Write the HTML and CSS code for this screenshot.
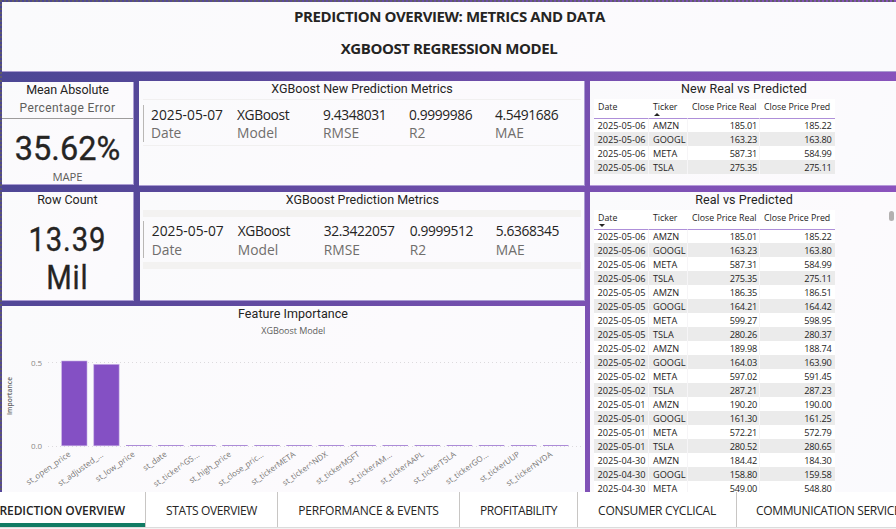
FILE: index.html
```html
<!DOCTYPE html>
<html lang="en">
<head>
<meta charset="utf-8">
<title>Prediction Overview</title>
<link rel="stylesheet" href="styles.css">
</head>
<body>
<main class="report">
  <header class="panel heading">
    <h1>PREDICTION OVERVIEW: METRICS AND DATA</h1>
    <h2>XGBOOST REGRESSION MODEL</h2>
  </header>
  <div class="columns">
    <div class="left">
      <div class="row first">
        <section class="panel kpi">
          <h3><span class="t-mean">Mean Absolute</span></h3>
          <p class="sub"><span>Percentage Error</span></p>
          <p class="value mape">35.62%</p>
          <p class="caption">MAPE</p>
        </section>
        <section class="panel metrics">
          <h3><span class="t-new">XGBoost New Prediction Metrics</span></h3>
          <div class="card thin">
            <dl><dd>2025-05-07</dd><dt>Date</dt></dl>
            <dl><dd>XGBoost</dd><dt>Model</dt></dl>
            <dl><dd>9.4348031</dd><dt>RMSE</dt></dl>
            <dl><dd>0.9999986</dd><dt>R2</dt></dl>
            <dl><dd>4.5491686</dd><dt>MAE</dt></dl>
          </div>
        </section>
      </div>
      <div class="row second">
        <section class="panel kpi">
          <h3><span class="t-row">Row Count</span></h3>
          <p class="value count">13.39<br>Mil</p>
        </section>
        <section class="panel metrics">
          <h3><span class="t-pred">XGBoost Prediction Metrics</span></h3>
          <div class="card thick">
            <dl><dd>2025-05-07</dd><dt>Date</dt></dl>
            <dl><dd>XGBoost</dd><dt>Model</dt></dl>
            <dl><dd>32.3422057</dd><dt>RMSE</dt></dl>
            <dl><dd>0.9999512</dd><dt>R2</dt></dl>
            <dl><dd>5.6368345</dd><dt>MAE</dt></dl>
          </div>
        </section>
      </div>
      <section class="panel chart">
        <svg width="583" height="186" viewBox="2 306 583 186">
          <text class="c-title" x="293" y="318" text-anchor="middle" textLength="110">Feature Importance</text>
          <text class="c-sub" x="293.3" y="334" text-anchor="middle" textLength="64">XGBoost Model</text>
          <text class="c-axis" transform="translate(12.2 396) rotate(-90)" text-anchor="middle" textLength="38">Importance</text>
          <text class="c-tick" x="42" y="366" text-anchor="end" textLength="11">0.5</text>
          <text class="c-tick" x="42" y="449" text-anchor="end" textLength="11">0.0</text>
          <path class="grid" d="M48 362.5H583M48 446.5H583"/>
          <g class="bars">
            <rect x="61.7" y="361" width="25.3" height="84.8"/>
            <rect x="93.8" y="364.4" width="25.3" height="81.4"/>
          </g>
          <g class="flat">
            <path d="M126 445.5h25.5M158.1 445.5h25.5M190.2 445.5h25.5M222.2 445.5h25.5M254.3 445.5h25.5M286.3 445.5h25.5M318.4 445.5h25.5M350.4 445.5h25.5M382.5 445.5h25.5M414.6 445.5h25.5M446.7 445.5h25.5M478.8 445.5h25.5M510.9 445.5h25.5M543 445.5h25.5"/>
          </g>
          <g class="labels" text-anchor="end">
            <text transform="translate(71.2 455.5) rotate(-35)" textLength="52">st_open_price</text>
            <text transform="translate(103.7 456) rotate(-35)" textLength="53">st_adjusted_...</text>
            <text transform="translate(135.4 455.5) rotate(-35)" textLength="46">st_low_price</text>
            <text transform="translate(167.4 455.5) rotate(-35)" textLength="27">st_date</text>
            <text transform="translate(200 456) rotate(-35)" textLength="54">st_ticker^GS...</text>
            <text transform="translate(231.6 455.5) rotate(-35)" textLength="49">st_high_price</text>
            <text transform="translate(264 456) rotate(-35)" textLength="53">st_close_pric...</text>
            <text transform="translate(296 455.5) rotate(-35)" textLength="52">st_tickerMETA</text>
            <text transform="translate(328.2 455.5) rotate(-35)" textLength="53">st_ticker^NDX</text>
            <text transform="translate(360 455.5) rotate(-35)" textLength="51">st_tickerMSFT</text>
            <text transform="translate(392.5 456) rotate(-35)" textLength="51">st_tickerAM...</text>
            <text transform="translate(424.4 455.5) rotate(-35)" textLength="51">st_tickerAAPL</text>
            <text transform="translate(456.5 455.5) rotate(-35)" textLength="50">st_tickerTSLA</text>
            <text transform="translate(489 456) rotate(-35)" textLength="50">st_tickerGO...</text>
            <text transform="translate(520.5 455.5) rotate(-35)" textLength="47">st_tickerUUP</text>
            <text transform="translate(552.8 455.5) rotate(-35)" textLength="54">st_tickerNVDA</text>
          </g>
        </svg>
      </section>
    </div>
    <div class="right">
      <section class="panel prices new">
        <h3><span class="t-nrp">New Real vs Predicted</span></h3>
        <table>
          <colgroup><col class="c1"><col class="c2"><col class="c3"><col class="c4"></colgroup>
          <thead><tr><th>Date</th><th><span class="sorted asc">Ticker</span></th><th>Close Price Real</th><th>Close Price Pred</th></tr></thead>
          <tbody>
            <tr><td>2025-05-06</td><td>AMZN</td><td>185.01</td><td>185.22</td></tr>
            <tr><td>2025-05-06</td><td>GOOGL</td><td>163.23</td><td>163.80</td></tr>
            <tr><td>2025-05-06</td><td>META</td><td>587.31</td><td>584.99</td></tr>
            <tr><td>2025-05-06</td><td>TSLA</td><td>275.35</td><td>275.11</td></tr>
          </tbody>
        </table>
      </section>
      <section class="panel prices all">
        <h3><span class="t-rp">Real vs Predicted</span></h3>
        <div class="scroll"><table>
          <colgroup><col class="c1"><col class="c2"><col class="c3"><col class="c4"></colgroup>
          <thead><tr><th><span class="sorted desc">Date</span></th><th>Ticker</th><th>Close Price Real</th><th>Close Price Pred</th></tr></thead>
          <tbody>
            <tr><td>2025-05-06</td><td>AMZN</td><td>185.01</td><td>185.22</td></tr>
            <tr><td>2025-05-06</td><td>GOOGL</td><td>163.23</td><td>163.80</td></tr>
            <tr><td>2025-05-06</td><td>META</td><td>587.31</td><td>584.99</td></tr>
            <tr><td>2025-05-06</td><td>TSLA</td><td>275.35</td><td>275.11</td></tr>
            <tr><td>2025-05-05</td><td>AMZN</td><td>186.35</td><td>186.51</td></tr>
            <tr><td>2025-05-05</td><td>GOOGL</td><td>164.21</td><td>164.42</td></tr>
            <tr><td>2025-05-05</td><td>META</td><td>599.27</td><td>598.95</td></tr>
            <tr><td>2025-05-05</td><td>TSLA</td><td>280.26</td><td>280.37</td></tr>
            <tr><td>2025-05-02</td><td>AMZN</td><td>189.98</td><td>188.74</td></tr>
            <tr><td>2025-05-02</td><td>GOOGL</td><td>164.03</td><td>163.90</td></tr>
            <tr><td>2025-05-02</td><td>META</td><td>597.02</td><td>591.45</td></tr>
            <tr><td>2025-05-02</td><td>TSLA</td><td>287.21</td><td>287.23</td></tr>
            <tr><td>2025-05-01</td><td>AMZN</td><td>190.20</td><td>190.00</td></tr>
            <tr><td>2025-05-01</td><td>GOOGL</td><td>161.30</td><td>161.25</td></tr>
            <tr><td>2025-05-01</td><td>META</td><td>572.21</td><td>572.79</td></tr>
            <tr><td>2025-05-01</td><td>TSLA</td><td>280.52</td><td>280.65</td></tr>
            <tr><td>2025-04-30</td><td>AMZN</td><td>184.42</td><td>184.30</td></tr>
            <tr><td>2025-04-30</td><td>GOOGL</td><td>158.80</td><td>159.58</td></tr>
            <tr><td>2025-04-30</td><td>META</td><td>549.00</td><td>548.80</td></tr>
          </tbody>
        </table><i class="thumb"></i></div>
      </section>
    </div>
  </div>
</main>
<nav class="tabs">
  <a class="tab active">PREDICTION OVERVIEW</a>
  <a class="tab stats">STATS OVERVIEW</a>
  <a class="tab perf">PERFORMANCE &amp; EVENTS</a>
  <a class="tab profit">PROFITABILITY</a>
  <a class="tab cyc">CONSUMER CYCLICAL</a>
  <a class="tab comm">COMMUNICATION SERVICES</a>
</nav>
</body>
</html>
```
FILE: styles.css
```css
* { box-sizing: border-box; }
body, h1, h2, h3, p, dl, dt, dd { margin: 0; font-weight: normal; }
body {
  width: 896px;
  height: 529px;
  overflow: hidden;
  background: #f3f3f3;
  color: #252423;
  font-family: "Open Sans", "Noto Sans", sans-serif;
}
.report {
  height: 492px;
  padding: 2px 0 0 2px;
  overflow: hidden;
  background:
    repeating-linear-gradient(90deg, #5f5b66 0 2px, transparent 2px 4px) 0 0 / 100% 2px no-repeat,
    repeating-linear-gradient(180deg, #5f5b66 0 2px, transparent 2px 4px) 0 0 / 2px 100% no-repeat,
    linear-gradient(112deg, #4a4694 0%, #5a489b 25%, #7850b1 60%, #9254c2 100%);
}
.panel {
  background: linear-gradient(120deg, #fafafc, #fcfafd 60%, #fafafd);
  overflow: hidden;
}
.heading {
  height: 70px;
  border-bottom: 1px solid #a99bd0;
  text-align: center;
}
.heading h1, .heading h2 {
  font-size: 15px;
  font-weight: 700;
  line-height: 32px;
  letter-spacing: -.43px;
  white-space: nowrap;
}
.heading h1 { margin-top: -2px; padding-left: 1px; }
.columns { display: flex; gap: 5px; padding-top: 9px; }
.left { width: 583px; }
.right { width: 306px; }
.row { display: flex; }
.row .panel { border-right: 1px solid #aa9cd2; border-bottom: 1px solid #aa9cd2; }
.first { height: 105px; gap: 5px; margin-bottom: 6px; }
.first .kpi { margin-top: 1px; height: 103px; width: 132px; }
.first .metrics { width: 446px; }
.second { height: 109px; gap: 6px; margin-bottom: 5px; }
.second .kpi { width: 132px; }
.second .metrics { width: 446px; }
.panel h3 {
  font: 12.5px/16px Roboto, sans-serif;
  text-align: center;
  white-space: nowrap;
}
.kpi { text-align: center; }
.sub {
  height: 21px;
  border-bottom: 1px solid #9e9c9c;
  color: #605e5c;
  font: 12px/21px Roboto, sans-serif;
  letter-spacing: .4px;
}
.t-mean { letter-spacing: -.08px; }
.t-new, .t-pred { padding-left: 1px; }
.t-nrp, .t-rp { letter-spacing: .1px; padding-left: 2px; }
.value { font-family: Roboto, sans-serif; }
.mape { font-size: 34px; line-height: 40px; margin-top: 9px; transform: scaleX(.955); }
.caption { color: #605e5c; font-size: 11.3px; line-height: 14px; margin-top: 2px; letter-spacing: -.1px; }
.count { font-size: 34px; line-height: 38px; margin-top: 12px; letter-spacing: 1px; transform: scaleX(.86); }
.mape, .count { -webkit-text-stroke: .35px #252423; }
.card {
  display: grid;
  grid-template-columns: 86px 86px 86px 86px 90px;
  margin: 2px 3px 0 4px;
  padding: 4px 0;
}
.thin { border-top: 1px solid #f1f0f0; border-bottom: 1px solid #f1f0f0; padding: 5px 0 3px; }
.thick { border-top: 7px solid #f3f2f1; border-bottom: 7px solid #f3f2f1; margin: 2px 3px 0; }
.card dl { font-size: 13.8px; padding-left: 8px; white-space: nowrap; }
.thick dl { padding-left: 9px; }
.card dl:first-child { border-left: 1px solid #b9b7b5; padding-left: 7px; }
.thick dl:first-child { padding-left: 8px; }
.card dd { line-height: 19px; letter-spacing: -.4px; }
.card dl:first-child dd { letter-spacing: 0; }
.card dt { color: #706e6c; line-height: 18px; }
.thick dt { padding-top: 1px; line-height: 17px; }
.chart { height: 186px; }
.chart svg { display: block; }
.c-title { font: 12.5px Roboto, sans-serif; fill: #252423; }
.c-sub { font-size: 9px; fill: #605e5c; }
.c-axis { font-size: 6.7px; font-weight: 600; fill: #666; }
.c-tick { font-size: 8px; fill: #8a8886; }
.labels { font-size: 8px; fill: #777573; }
.grid { stroke: #dcdadd; stroke-dasharray: 1 3; }
.bars { fill: #8450c4; stroke: #c4abe4; stroke-width: .6; }
.flat { stroke: #ac8bd8; stroke-width: 1; }
.prices.new { height: 105px; border-bottom: 1px solid #b69ada; margin-bottom: 6px; }
.prices.all { height: 300px; }
.prices table { width: 241px; margin: 2px 0 0 4px; border-collapse: separate; border-spacing: 0; table-layout: fixed; background: #fff; }
.scroll { display: flex; justify-content: space-between; }
.thumb { width: 5px; height: 10px; margin: 3px 2px 0 0; border-radius: 3px; background: #b3b0b0; }
.c1 { width: 55px; } .c2 { width: 39px; } .c3 { width: 72px; } .c4 { width: 75px; }
.prices th {
  height: 20px;
  padding: 0 0 3px 4px;
  border-bottom: 1px solid #ae8fd9;
  border-right: 1px solid #fff;
  font-size: 8.8px;
  font-weight: normal;
  line-height: 16px;
  text-align: left;
  white-space: nowrap;
}
.prices th:last-child, .prices td:last-child { border-right: 0; }
.sorted { position: relative; }
.sorted::after {
  content: "";
  position: absolute;
  left: 1px;
  top: 12px;
  border: 3px solid transparent;
}
.asc::after { border-width: 0 3px 3px; border-bottom-color: #252423; }
.desc::after { border-width: 3px 3px 0; border-top-color: #252423; }
.prices td {
  height: 14px;
  padding: 2px 4px 0;
  border-right: 1px solid #f6f5f7;
  font-size: 9.2px;
  line-height: 12px;
  white-space: nowrap;
}
.prices td:first-child { padding-left: 3.5px; }
.prices tr:first-child td { height: 13px; padding-top: 1px; }
.prices tr:nth-child(even) td { background: #ebebeb; }
.prices td:nth-child(n+3) { text-align: right; letter-spacing: -.25px; }
.prices td:nth-child(3) { padding-right: 2px; }
.prices td:nth-child(4) { padding-right: 3.5px; }
.tabs {
  display: flex;
  height: 36px;
  background: #fff;
  border-bottom: 1px solid #dcdcdc;
}
.tab {
  flex: none;
  height: 35px;
  border-right: 1px solid #c8c6c4;
  font-size: 12px;
  line-height: 38px;
  letter-spacing: -.35px;
  text-align: center;
  white-space: nowrap;
}
.active {
  display: flex;
  justify-content: flex-end;
  width: 146px;
  padding-right: 20px;
  font-weight: 600;
  letter-spacing: -.1px;
  background: linear-gradient(#107c64, #107c64) 0 100% / 100% 4px no-repeat;
}
.stats { width: 132px; }
.perf { width: 182px; letter-spacing: -.15px; }
.profit { width: 118px; }
.cyc { width: 159px; letter-spacing: -.25px; }
.comm { padding-left: 19px; }
```
